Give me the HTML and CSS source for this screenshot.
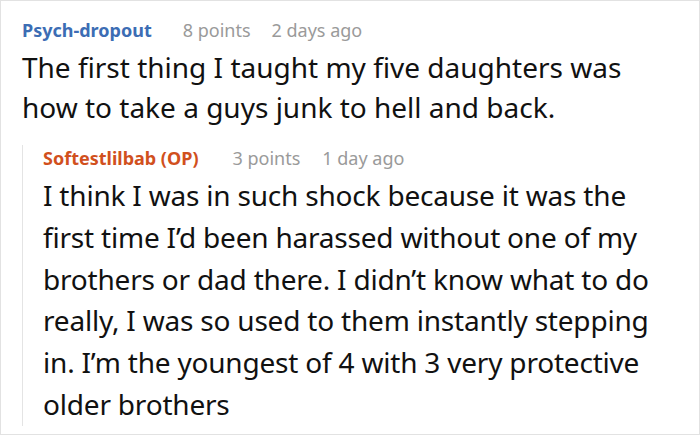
FILE: index.html
```html
<!DOCTYPE html>
<html>
<head>
<meta charset="utf-8">
<link rel="stylesheet" href="styles.css">
</head>
<body>
<div class="frame">
  <div class="comment">
    <div class="meta">
      <span class="author author-blue">Psych-dropout</span>
      <span class="info">8 points</span>
      <span class="info">2 days ago</span>
    </div>
    <p class="body">The first thing I taught my five daughters was how to take a guys junk to hell and back.</p>
    <div class="reply">
      <div class="meta meta-reply">
        <span class="author author-op">Softestlilbab (OP)</span>
        <span class="info">3 points</span>
        <span class="info">1 day ago</span>
      </div>
      <p class="body body-reply">I think I was in such shock because it was the first time I’d been harassed without one of my brothers or dad there. I didn’t know what to do really, I was so used to them instantly stepping in. I’m the youngest of 4 with 3 very protective older brothers</p>
    </div>
  </div>
</div>
</body>
</html>
```

FILE: styles.css
```css
html, body {
  margin: 0;
  padding: 0;
  background: #fff;
}
body {
  font-family: "Noto Sans", "DejaVu Sans", sans-serif;
}
.frame {
  width: 700px;
  height: 435px;
  box-sizing: border-box;
  border: 1px solid #e2e2e2;
  padding: 16px 20px 0 21px;
  overflow: hidden;
}
.meta {
  display: flex;
  align-items: baseline;
  gap: 21px;
  font-size: 18px;
  line-height: 26px;
}
.author {
  font-weight: 700;
  margin-right: 10px;
}
.author-blue { color: #3c6db4; }
.author-op { color: #d1501d; }
.meta-reply .author { margin-right: 12px; }
.meta-reply { gap: 22px; }
.info { color: #9a9a9a; }
.body {
  margin: 4px 0 0;
  font-size: 28px;
  line-height: 40px;
  color: #111;
}
.reply {
  margin-top: 28px;
  border-left: 1px solid #e4e4e4;
  padding-left: 20px;
}
.meta-reply {
  margin-top: -10px;
}
.body-reply {
  line-height: 41.8px;
  letter-spacing: -0.2px;
  margin-bottom: -9px;
}
```
